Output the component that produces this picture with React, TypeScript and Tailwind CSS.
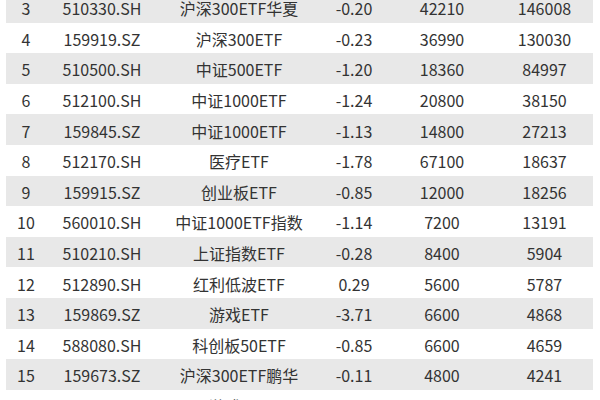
const rows: [string, string, string, string, string, string][] = [
  ["3", "510330.SH", "沪深300ETF华夏", "-0.20", "42210", "146008"],
  ["4", "159919.SZ", "沪深300ETF", "-0.23", "36990", "130030"],
  ["5", "510500.SH", "中证500ETF", "-1.20", "18360", "84997"],
  ["6", "512100.SH", "中证1000ETF", "-1.24", "20800", "38150"],
  ["7", "159845.SZ", "中证1000ETF", "-1.13", "14800", "27213"],
  ["8", "512170.SH", "医疗ETF", "-1.78", "67100", "18637"],
  ["9", "159915.SZ", "创业板ETF", "-0.85", "12000", "18256"],
  ["10", "560010.SH", "中证1000ETF指数", "-1.14", "7200", "13191"],
  ["11", "510210.SH", "上证指数ETF", "-0.28", "8400", "5904"],
  ["12", "512890.SH", "红利低波ETF", "0.29", "5600", "5787"],
  ["13", "159869.SZ", "游戏ETF", "-3.71", "6600", "4868"],
  ["14", "588080.SH", "科创板50ETF", "-0.85", "6600", "4659"],
  ["15", "159673.SZ", "沪深300ETF鹏华", "-0.11", "4800", "4241"],
  ["16", "516010.SH", "游戏ETF", "-3.69", "5700", "4170"],
];

const widths = ["w-[40px]", "w-[112px]", "w-[162px]", "w-[68px]", "w-[108px]", "w-[97px]"];

export default function App() {
  return (
    <div
      className="w-[600px] h-[400px] overflow-hidden bg-white text-[#333] text-[16px]"
      style={{ fontFamily: '"Noto Sans CJK SC", "Noto Sans", sans-serif' }}
    >
      <div className="mt-[-8px] ml-[6px] w-[587px]">
        {rows.map((r, i) => (
          <div
            key={r[0]}
            className={`flex items-center h-[30.6px] ${i % 2 === 0 ? "bg-[#e8e8e8]" : "bg-white"}`}
          >
            {r.map((c, j) => (
              <div key={j} className={`${widths[j]} text-center whitespace-nowrap leading-none pt-[2px]`}>
                {c}
              </div>
            ))}
          </div>
        ))}
      </div>
    </div>
  );
}
